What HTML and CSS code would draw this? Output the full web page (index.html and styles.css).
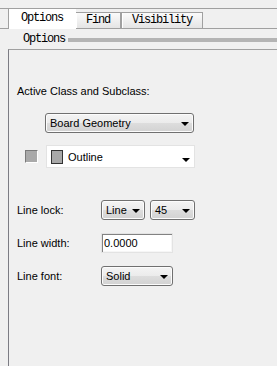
FILE: index.html
```html
<!DOCTYPE html>
<html>

<head>
    <meta charset="UTF-8">
    <title>Options</title>
    <link rel="stylesheet" href="styles.css">
</head>

<body>
    <div class="tabbar">
        <div class="tab selected">Options</div>
        <div class="tab">Find</div>
        <div class="tab">Visibility</div>
    </div>

    <div class="group-title">
        <span>Options</span>
        <div class="group-rule"></div>
    </div>

    <div class="panel">
        <div class="heading">Active Class and Subclass:</div>

        <div class="row indent">
            <div class="combo wide">
                <span>Board Geometry</span>
                <span class="arrow"></span>
            </div>
        </div>

        <div class="row swatch-row">
            <div class="color-btn"></div>
            <div class="combo flat wide">
                <span class="swatch"></span>
                <span class="combo-text">Outline</span>
                <span class="arrow"></span>
            </div>
        </div>

        <div class="row field first">
            <label>Line lock:</label>
            <div class="combo small">
                <span>Line</span>
                <span class="arrow"></span>
            </div>
            <div class="combo small angle">
                <span>45</span>
                <span class="arrow"></span>
            </div>
        </div>

        <div class="row field">
            <label>Line width:</label>
            <input type="text" class="text-input" value="0.0000">
        </div>

        <div class="row field">
            <label>Line font:</label>
            <div class="combo medium">
                <span>Solid</span>
                <span class="arrow"></span>
            </div>
        </div>
    </div>
</body>

</html>
```

FILE: styles.css
```css
body {
    margin: 0;
    background-color: #f0f0f0;
    font-family: "Liberation Sans", Arial, sans-serif;
    font-size: 11px;
    color: #000000;
    height: 366px;
    overflow: hidden;
}

.tabbar {
    margin-top: 8px;
    height: 19px;
    padding-left: 8px;
    border-top: 1px solid #a0a0a0;
    border-bottom: 1px solid #a0a0a0;
    display: flex;
    align-items: flex-end;
}

.tab {
    height: 15px;
    line-height: 15px;
    padding: 0 10px;
    font-family: "Liberation Mono", monospace;
    font-size: 12px;
    letter-spacing: -1.2px;
    border: 1px solid #a0a0a0;
    border-bottom: 0;
    border-left-color: #ffffff;
    box-shadow: inset 1px 0 0 #ffffff;
    background: linear-gradient(to bottom, #fbfbfb, #e4e4e4);
}

.tab + .tab {
    border-left: 1px solid #a0a0a0;
}

.tab.selected {
    height: 20px;
    line-height: 19px;
    padding: 0 13px 0 12px;
    background: #ffffff;
    border: 0;
    border-left: 1px solid #a0a0a0;
    box-shadow: none;
    margin-bottom: -1px;
}

.tab.selected + .tab {
    border-left: 0;
}

.group-title {
    display: flex;
    align-items: center;
    padding-left: 23px;
    margin-top: 4px;
    height: 12px;
    font-family: "Liberation Mono", monospace;
    font-size: 12px;
    letter-spacing: -1.2px;
}

.group-rule {
    flex: 1;
    height: 4px;
    margin-left: 3px;
    margin-top: 2px;
    background-color: #b4b4b4;
}

.panel {
    margin-top: 4px;
    margin-left: 8px;
    height: 320px;
    border-top: 1px solid #a0a0a0;
    border-left: 1px solid #7c7c84;
    padding-left: 8px;
}

.heading {
    margin-top: 35px;
    line-height: 13px;
}

.row {
    display: flex;
    align-items: center;
}

.indent {
    margin-top: 15px;
    padding-left: 28px;
}

.swatch-row {
    margin-top: 12px;
    padding-left: 8px;
}

.color-btn {
    width: 11px;
    height: 11px;
    background-color: #a9a9a9;
    border: 1px solid;
    border-color: #7a7a7a #ffffff #ffffff #7a7a7a;
    margin-right: 8px;
}

.combo {
    position: relative;
    border: 1px solid #707070;
    border-radius: 3px;
    background: linear-gradient(to bottom, #f4f4f4 0%, #ebebeb 50%, #dddddd 51%, #d2d2d2 100%);
    box-shadow: inset 0 0 0 1px #fcfcfc;
    display: flex;
    align-items: center;
    padding-left: 4px;
    box-sizing: border-box;
    height: 20px;
}

.combo.flat {
    height: 23px;
    border: 1px solid #e3e3e3;
    border-radius: 0;
    background: #ffffff;
    box-shadow: none;
}

.wide {
    width: 149px;
}

.small {
    width: 44px;
}

.angle {
    width: 45px;
    margin-left: 5px;
}

.medium {
    width: 72px;
}

.arrow {
    position: absolute;
    right: 4px;
    top: 50%;
    margin-top: -1px;
    width: 0;
    height: 0;
    border-left: 4px solid transparent;
    border-right: 4px solid transparent;
    border-top: 4px solid #000000;
}

.flat .arrow {
    margin-top: 1px;
}

.swatch {
    width: 10px;
    height: 12px;
    background-color: #a8a8a8;
    border: 1px solid #333333;
    margin-right: 5px;
}

.field {
    margin-top: 13px;
}

.field.first {
    margin-top: 32px;
}

.field label {
    width: 84px;
}

.text-input {
    width: 72px;
    height: 20px;
    box-sizing: border-box;
    border: 1px solid #e3e3e3;
    box-shadow: inset 1px 1px 0 #828282, inset -1px -1px 0 #f6f6f6;
    padding: 0 2px;
    font-family: "Liberation Sans", Arial, sans-serif;
    font-size: 11px;
    outline: none;
    background: #ffffff;
    margin: 0;
}
```
